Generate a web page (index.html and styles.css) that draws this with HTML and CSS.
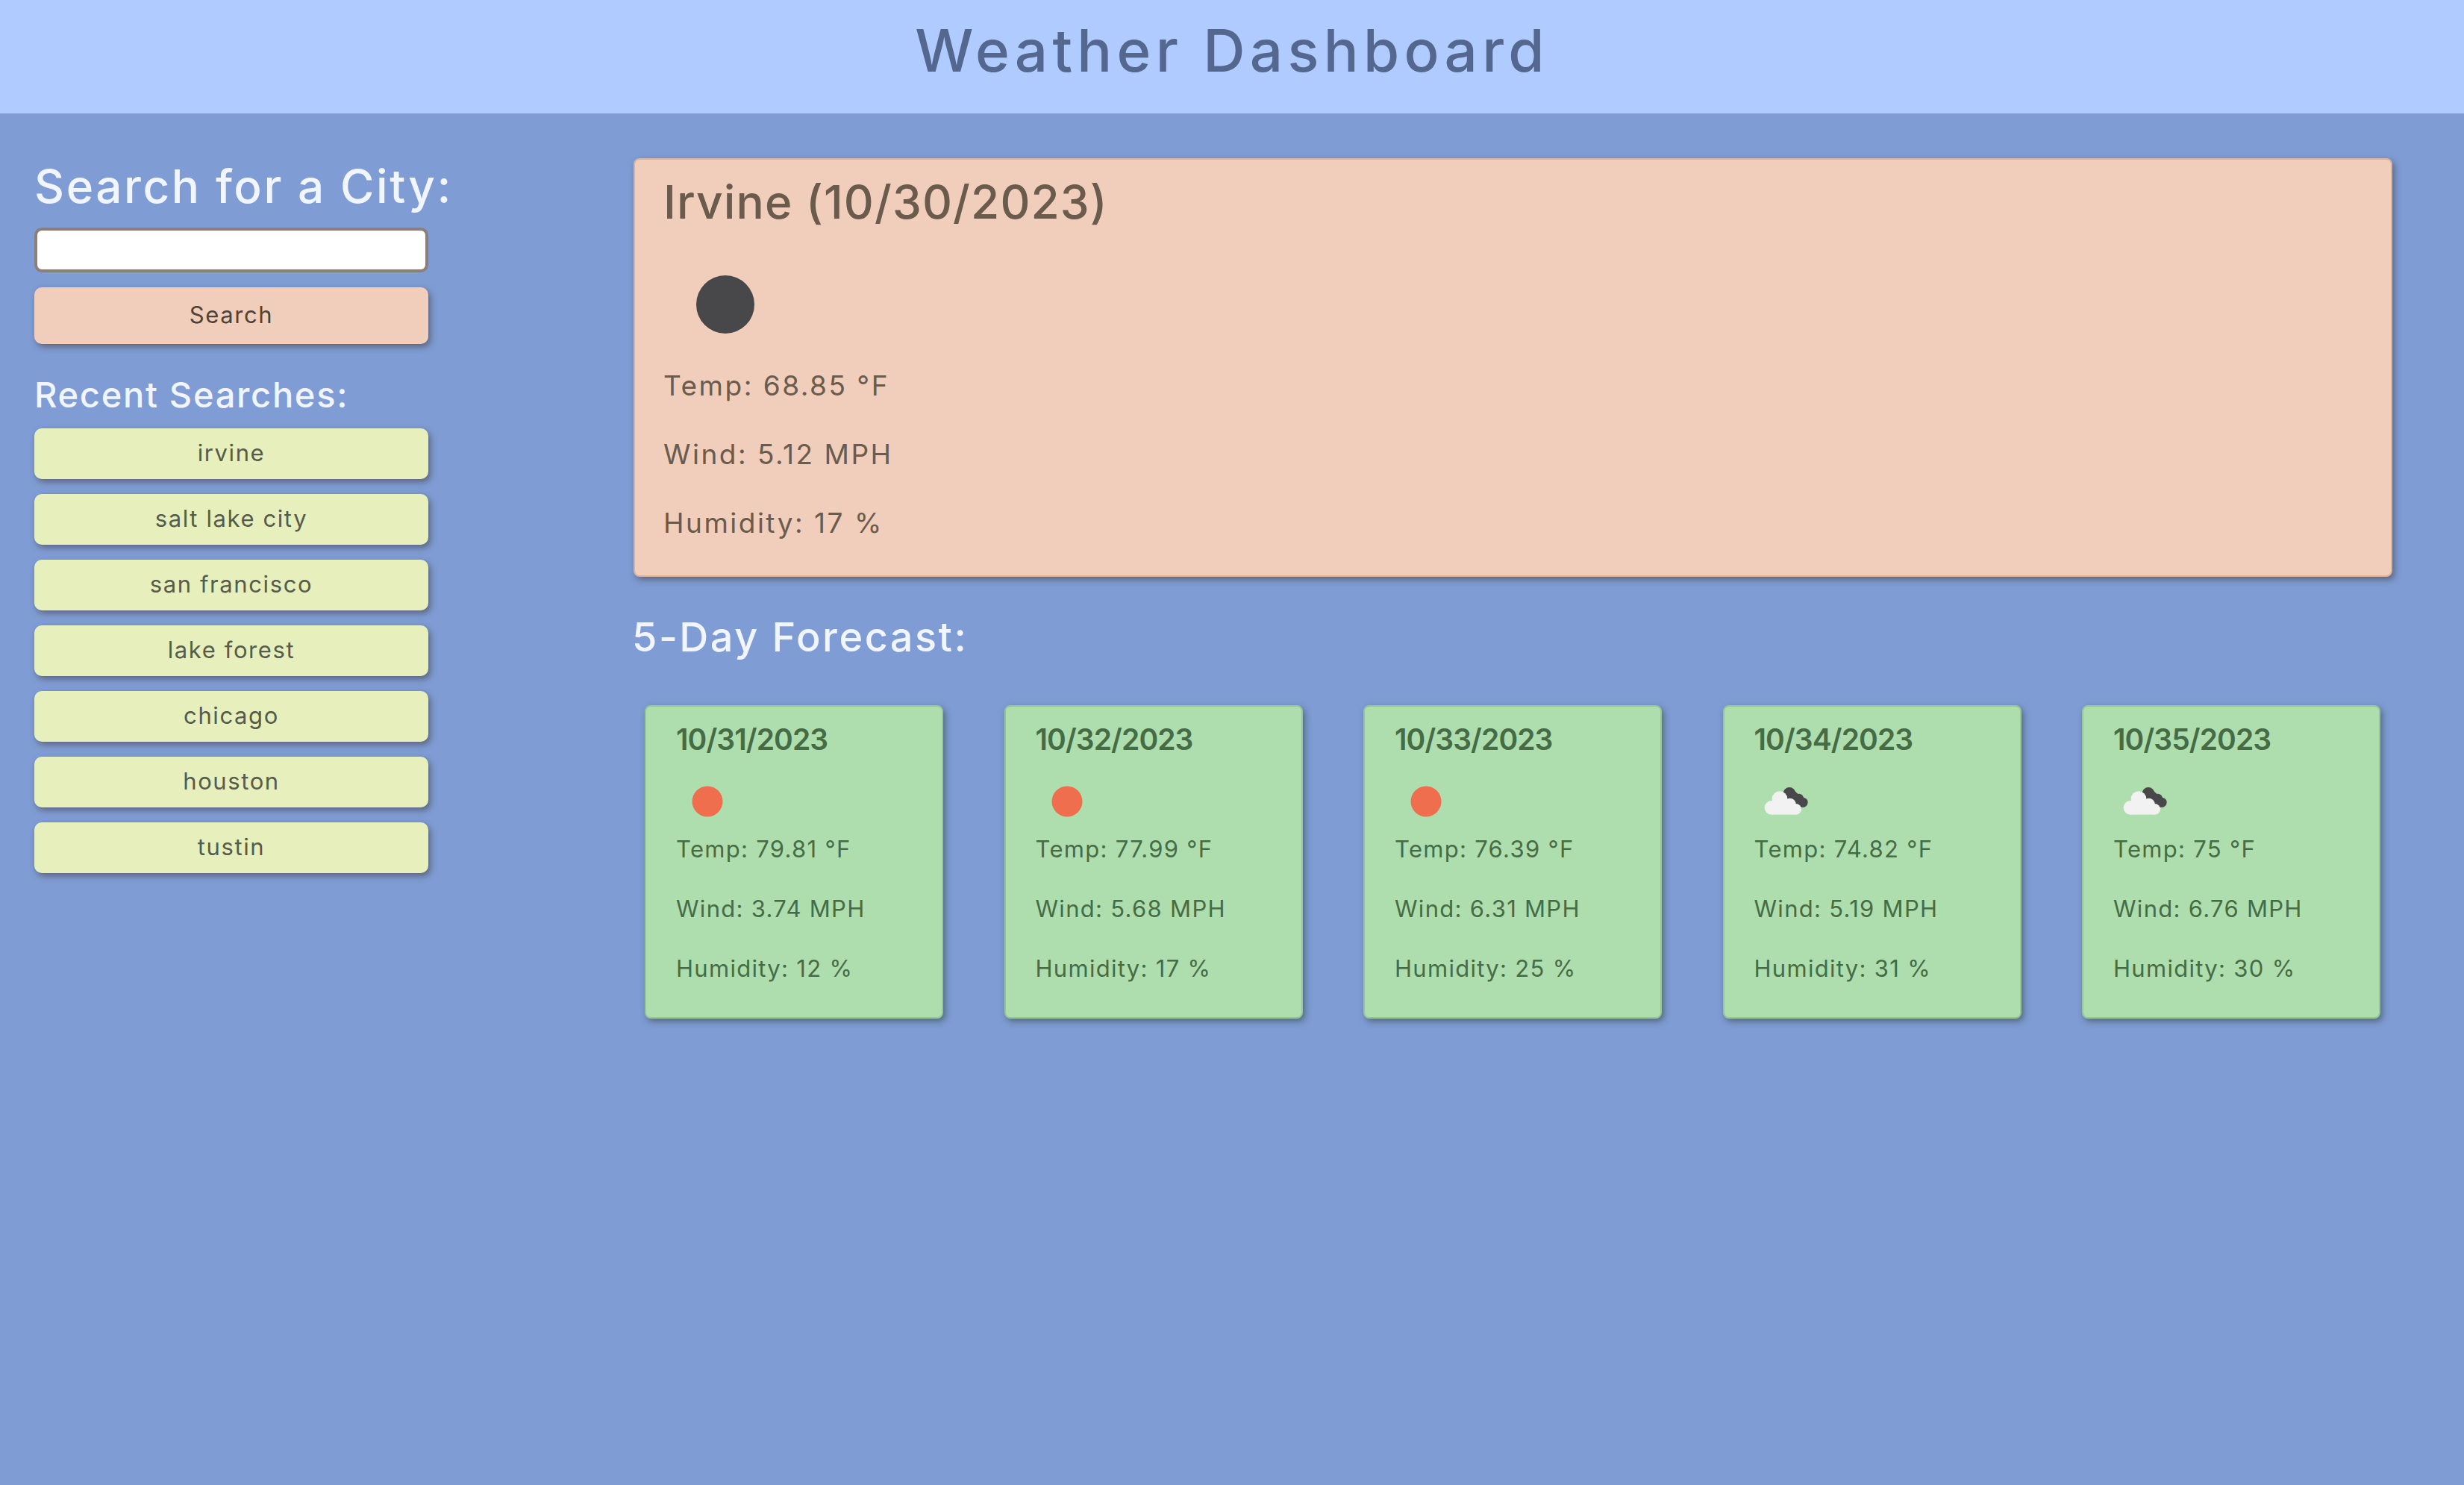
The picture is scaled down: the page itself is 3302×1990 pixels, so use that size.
FILE: index.html
```html
<!DOCTYPE html>
<html>
  <head>
    <title>Weather Dashboard</title>
    <link rel="stylesheet" href="styles.css">
  </head>
  <body>
    <header class="top-bar">
      <h1>Weather Dashboard</h1>
    </header>

    <main class="layout">
      <aside class="sidebar">
        <h2 class="search-title">Search for a City:</h2>
        <input class="search-input" type="text">
        <button class="search-btn">Search</button>
        <h3 class="recent-title">Recent Searches:</h3>
        <div class="recent-list">
          <button class="recent-btn">irvine</button>
          <button class="recent-btn">salt lake city</button>
          <button class="recent-btn">san francisco</button>
          <button class="recent-btn">lake forest</button>
          <button class="recent-btn">chicago</button>
          <button class="recent-btn">houston</button>
          <button class="recent-btn">tustin</button>
        </div>
      </aside>

      <section class="content">
        <div class="today">
          <h2 class="today-title">Irvine (10/30/2023)</h2>
          <svg class="today-icon" viewBox="0 0 162 122"><circle cx="81" cy="61" r="39" fill="#48484a"/></svg>
          <p>Temp: 68.85 °F</p>
          <p>Wind: 5.12 MPH</p>
          <p>Humidity: 17 %</p>
        </div>

        <h2 class="forecast-title">5-Day Forecast:</h2>

        <div class="forecast">
          <div class="day">
            <h3>10/31/2023</h3>
            <svg class="day-icon" viewBox="0 0 82 48"><circle cx="42" cy="24" r="20.5" fill="#ee6e4e"/></svg>
            <p>Temp: 79.81 °F</p>
            <p>Wind: 3.74 MPH</p>
            <p>Humidity: 12 %</p>
          </div>
          <div class="day">
            <h3>10/32/2023</h3>
            <svg class="day-icon" viewBox="0 0 82 48"><circle cx="42" cy="24" r="20.5" fill="#ee6e4e"/></svg>
            <p>Temp: 77.99 °F</p>
            <p>Wind: 5.68 MPH</p>
            <p>Humidity: 17 %</p>
          </div>
          <div class="day">
            <h3>10/33/2023</h3>
            <svg class="day-icon" viewBox="0 0 82 48"><circle cx="42" cy="24" r="20.5" fill="#ee6e4e"/></svg>
            <p>Temp: 76.39 °F</p>
            <p>Wind: 6.31 MPH</p>
            <p>Humidity: 25 %</p>
          </div>
          <div class="day">
            <h3>10/34/2023</h3>
            <svg class="day-icon" viewBox="183 360 246 144">
              <g fill="#48484a"><circle cx="324" cy="400" r="25"/><circle cx="362" cy="420" r="19"/><circle cx="378" cy="436" r="20"/><path d="M305 385L345 390L380 420L375 455L330 445Z"/></g>
              <g fill="#f2f2f2"><circle cx="285" cy="422" r="31"/><circle cx="252" cy="457" r="28"/><circle cx="326" cy="443" r="24"/><circle cx="350" cy="463" r="22"/><rect x="252" y="440" width="98" height="45"/></g>
            </svg>
            <p>Temp: 74.82 °F</p>
            <p>Wind: 5.19 MPH</p>
            <p>Humidity: 31 %</p>
          </div>
          <div class="day">
            <h3>10/35/2023</h3>
            <svg class="day-icon" viewBox="183 360 246 144">
              <g fill="#48484a"><circle cx="324" cy="400" r="25"/><circle cx="362" cy="420" r="19"/><circle cx="378" cy="436" r="20"/><path d="M305 385L345 390L380 420L375 455L330 445Z"/></g>
              <g fill="#f2f2f2"><circle cx="285" cy="422" r="31"/><circle cx="252" cy="457" r="28"/><circle cx="326" cy="443" r="24"/><circle cx="350" cy="463" r="22"/><rect x="252" y="440" width="98" height="45"/></g>
            </svg>
            <p>Temp: 75 °F</p>
            <p>Wind: 6.76 MPH</p>
            <p>Humidity: 30 %</p>
          </div>
        </div>
      </section>
    </main>
  </body>
</html>
```

FILE: styles.css
```css
* {
  box-sizing: border-box;
}

body {
  margin: 0;
  min-height: 100vh;
  background-color: #7f9cd4;
  font-family: "Inter", "Open Sans", sans-serif;
}

h1, h2, h3, p {
  margin: 0;
  font-weight: 400;
}

button, input {
  font-family: inherit;
}

.top-bar {
  height: 152px;
  padding-bottom: 16px;
  display: flex;
  align-items: center;
  justify-content: center;
  background-color: #b0cbff;
}

.top-bar h1 {
  font-size: 78px;
  line-height: 96px;
  font-weight: 500;
  letter-spacing: 6.3px;
  color: #54678f;
}

.layout {
  display: flex;
  padding: 60px 96px 0 46px;
}

/* left column */
.sidebar {
  width: 528px;
  margin-right: 275px;
  flex-shrink: 0;
  color: #f0f5ff;
}

.search-title {
  width: 600px;
  font-size: 62px;
  line-height: 76px;
  font-weight: 500;
  letter-spacing: 2.6px;
}

.search-input {
  display: block;
  width: 100%;
  height: 60px;
  margin-top: 17px;
  background-color: white;
  border: 4px solid #8c7f7a;
  border-radius: 10px;
}

.search-btn, .recent-btn {
  display: block;
  width: 100%;
  padding-bottom: 4px;
  border: none;
  border-radius: 10px;
  font-size: 31px;
  letter-spacing: 1.6px;
  cursor: pointer;
  box-shadow: 3px 4px 8px rgba(60, 50, 40, 0.5);
}

.search-btn {
  height: 76px;
  margin-top: 20px;
  background-color: #f0cebb;
  color: #4e4238;
}

.recent-title {
  margin-top: 39px;
  font-size: 47px;
  line-height: 58px;
  font-weight: 500;
  letter-spacing: 1.7px;
}

.recent-list {
  display: flex;
  flex-direction: column;
  gap: 20px;
  margin-top: 16px;
}

.recent-btn {
  height: 68px;
  background-color: #e7f0bc;
  color: #565c4b;
}

/* right column */
.content {
  flex: 1;
}

.today {
  padding: 19px 38px 24px;
  background-color: #f0cebb;
  border: 2px solid #d8b3a0;
  border-radius: 8px;
  box-shadow: 3px 4px 8px rgba(60, 50, 40, 0.5);
  color: #6a5b4d;
}

.today-title {
  font-size: 62px;
  line-height: 76px;
  font-weight: 500;
  letter-spacing: 1.1px;
}

.today-icon {
  display: block;
  width: 162px;
  height: 122px;
  margin: 38px 0 2px 2px;
}

.today p {
  font-size: 37px;
  line-height: 92px;
  letter-spacing: 2.5px;
}

.forecast-title {
  margin: 49px 0 0 -2px;
  font-size: 54px;
  line-height: 64px;
  font-weight: 500;
  letter-spacing: 2.5px;
  color: #f0f5ff;
}

.forecast {
  display: flex;
  justify-content: space-between;
  margin-top: 59px;
  padding: 0 16px 0 15px;
}

.day {
  width: 400px;
  height: 420px;
  padding: 20px 40px 25px;
  background-color: #aedeae;
  border: 2px solid #98c69a;
  border-radius: 8px;
  box-shadow: 3px 4px 8px rgba(40, 60, 40, 0.5);
  color: #466c46;
}

.day h3 {
  font-size: 39px;
  line-height: 48px;
  font-weight: 600;
  letter-spacing: -0.9px;
}

.day-icon {
  display: block;
  width: 82px;
  height: 48px;
  margin-top: 35px;
}

.day p {
  font-size: 31px;
  line-height: 80px;
  letter-spacing: 1.3px;
}
```
